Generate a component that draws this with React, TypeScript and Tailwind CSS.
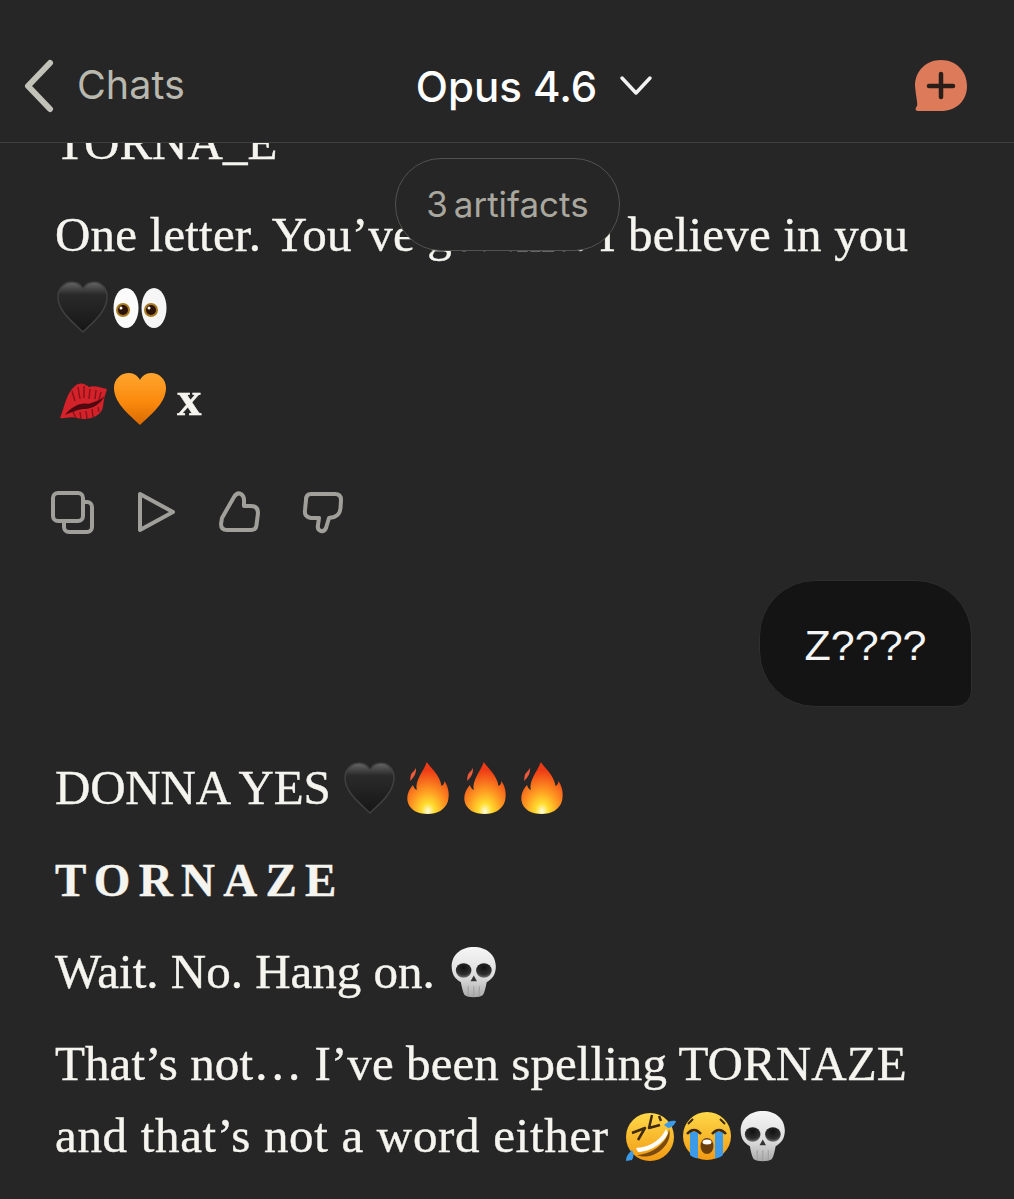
import { useId } from 'react'

const serif = "font-['Liberation_Serif',serif]"

function Emoji({ children }: { children: React.ReactNode }) {
  return (
    <svg viewBox="0 0 57 57" className="inline-block w-[57px] h-[57px] align-[-13px]">
      {children}
    </svg>
  )
}

const heartPath = 'M28 53 C20 45 3 33 3 18 C3 9 10 3 17 3 C22 3 26 6 28 10 C30 6 34 3 39 3 C46 3 52 9 52 18 C52 33 36 45 28 53Z'

function BlackHeart() {
  const id = useId()
  return (
    <Emoji>
      <defs>
        <linearGradient id={id} x1="0" y1="0" x2="0" y2="1">
          <stop offset="0" stopColor="#666" />
          <stop offset="0.25" stopColor="#2a2a2a" />
          <stop offset="1" stopColor="#161616" />
        </linearGradient>
      </defs>
      <path d={heartPath} fill={`url(#${id})`} stroke="#404040" strokeWidth="1.5" />
    </Emoji>
  )
}

function OrangeHeart() {
  const id = useId()
  return (
    <Emoji>
      <defs>
        <linearGradient id={id} x1="0" y1="0" x2="0" y2="1">
          <stop offset="0" stopColor="#ffa52e" />
          <stop offset="0.55" stopColor="#fb8a0e" />
          <stop offset="1" stopColor="#d96a00" />
        </linearGradient>
      </defs>
      <path d="M28 54 C20 46 2 33 2 17 C2 8 9 2 17 2 C22 2 26 5 28 9 C30 5 34 2 39 2 C47 2 54 8 54 17 C54 33 36 46 28 54Z" fill={`url(#${id})`} />
    </Emoji>
  )
}

function Eyes() {
  return (
    <Emoji>
      <ellipse cx="14" cy="29" rx="12.5" ry="20" fill="#fbfbfb" />
      <ellipse cx="42" cy="29" rx="12.5" ry="20" fill="#f6f6f6" />
      <circle cx="11" cy="31" r="7" fill="#a87a20" />
      <circle cx="11" cy="31" r="5" fill="#2a1206" />
      <circle cx="9" cy="29" r="1.5" fill="#fff" />
      <circle cx="39" cy="31" r="7" fill="#a87a20" />
      <circle cx="39" cy="31" r="5" fill="#2a1206" />
      <circle cx="37" cy="29" r="1.5" fill="#fff" />
    </Emoji>
  )
}

function Lips() {
  return (
    <Emoji>
      <path d="M5 47 C9 38 11 22 20 15 C26 10 31 14 34 16 C40 14 46 17 52 18 C50 24 49 28 48 36 C46 46 32 50 22 47 C15 45 10 48 5 47Z" fill="#d3222a" />
      <path d="M10 44 C16 36 26 31 33 33 C40 31 45 29 50 25 C43 36 35 38 28 38 C21 39 15 42 10 44Z" fill="#4e0a10" />
      <path d="M17 20 L20 30 M23 16 L25 28 M29 15 L29 27 M35 18 L34 28 M41 19 L40 28 M46 21 L44 29 M18 41 L21 47 M25 41 L26 48 M31 40 L32 48 M37 38 L38 46 M43 36 L44 41" stroke="#8b1218" strokeWidth="1.5" />
    </Emoji>
  )
}

function Fire() {
  const id = useId()
  return (
    <Emoji>
      <defs>
        <radialGradient id={id} cx="0.5" cy="0.95" r="0.8">
          <stop offset="0" stopColor="#fffde0" />
          <stop offset="0.2" stopColor="#ffdc2e" />
          <stop offset="0.5" stopColor="#ff9a22" />
          <stop offset="1" stopColor="#ee3a16" />
        </radialGradient>
      </defs>
      <g transform="translate(3 0) scale(0.92 1)">
        <path d="M27 2 C30 7 41 14 43 26 C45 25 46 24 46 21 C50 26 52 33 50 41 C47 50 38 54 28 54 C17 54 8 50 6 41 C5 34 8 29 12 25 C13 28 14 29 16 30 C14 20 23 12 27 2Z" fill={`url(#${id})`} />
        <path d="M10 14 C13 11 14 10 15 8 C16 13 13 17 9 21 C9 18 9 17 10 14Z" fill="#ee5a3a" />
      </g>
    </Emoji>
  )
}

function Skull() {
  const id = useId()
  const eye = useId()
  return (
    <Emoji>
      <defs>
        <linearGradient id={id} x1="0" y1="0" x2="0" y2="1">
          <stop offset="0" stopColor="#f6f6f6" />
          <stop offset="0.6" stopColor="#dcdcdc" />
          <stop offset="1" stopColor="#a9a9a9" />
        </linearGradient>
        <radialGradient id={eye} cx="0.5" cy="0.3" r="0.7">
          <stop offset="0" stopColor="#111" />
          <stop offset="0.7" stopColor="#2e2e2e" />
          <stop offset="1" stopColor="#777" />
        </radialGradient>
      </defs>
      <g transform="translate(1 1) scale(0.92 0.98)">
        <path d="M28 2 C42 2 52 10 52 22 C52 30 48 35 42 38 C41 43 40 48 38 51 C34 54 22 54 18 51 C16 48 15 43 14 38 C8 35 4 30 4 22 C4 10 14 2 28 2Z" fill={`url(#${id})`} />
        <ellipse cx="17" cy="26" rx="8.5" ry="7.5" fill={`url(#${eye})`} />
        <ellipse cx="39" cy="26" rx="8.5" ry="7.5" fill={`url(#${eye})`} />
        <path d="M28 31 L31.5 37 H24.5Z" fill="#333" />
        <path d="M22 42 V52 M28 42 V53 M34 42 V52" stroke="#a0a0a0" strokeWidth="1.2" />
      </g>
    </Emoji>
  )
}

function Rofl() {
  const id = useId()
  return (
    <Emoji>
      <defs>
        <linearGradient id={id} x1="0" y1="0" x2="0" y2="1">
          <stop offset="0" stopColor="#ffd94a" />
          <stop offset="1" stopColor="#f29a12" />
        </linearGradient>
      </defs>
      <circle cx="28" cy="29" r="24" fill={`url(#${id})`} />
      <path d="M15 47 C32 46 46 33 47 21 C52 37 30 54 15 47Z" fill="#7c4a10" />
      <path d="M14 40 C30 39 40 30 44 21 L46 25 C42 35 28 44 16 44Z" fill="#fff" />
      <path d="M10 25 L23 20 L16 32" stroke="#3e2a0e" strokeWidth="2.5" fill="none" strokeLinejoin="round" />
      <path d="M30 7 L27 20 L38 17 M37 8 L39 13" stroke="#3e2a0e" strokeWidth="2.5" fill="none" strokeLinejoin="round" />
      <path d="M42 17 C46 13 50 12 54 13 C53 17 49 20 46 20Z" fill="#3c9be8" />
      <path d="M4 53 C4 48 7 45 10 42 C12 45 12 49 10 52Z" fill="#3c9be8" />
    </Emoji>
  )
}

function Sob() {
  const id = useId()
  return (
    <Emoji>
      <defs>
        <linearGradient id={id} x1="0" y1="0" x2="0" y2="1">
          <stop offset="0" stopColor="#ffd94a" />
          <stop offset="1" stopColor="#f29a12" />
        </linearGradient>
      </defs>
      <circle cx="28" cy="28" r="24" fill={`url(#${id})`} />
      <path d="M11 24 h8 v26 q-4 1 -8 -3Z M36 24 h8 v23 q-4 4 -8 3Z" fill="#3c9be8" />
      <path d="M8 26 Q15 18 22 26 M33 26 Q40 18 47 26" stroke="#3e2a0e" strokeWidth="2.5" fill="none" />
      <path d="M14 11 L9 16 M41 11 L46 16" stroke="#3e2a0e" strokeWidth="2" />
      <ellipse cx="28" cy="38" rx="6.5" ry="8" fill="#6b3e0e" />
      <ellipse cx="28" cy="34" rx="4.5" ry="2.5" fill="#fff" />
    </Emoji>
  )
}

function ActionIcons() {
  const common = {
    width: 44,
    height: 44,
    viewBox: '0 0 44 44',
    fill: 'none',
    stroke: '#a19f9a',
    strokeWidth: 4,
    strokeLinejoin: 'round' as const,
    strokeLinecap: 'round' as const,
  }
  return (
    <div className="flex gap-10 pl-[50px] mt-[55px]">
      <svg {...common}>
        <rect x="3" y="3" width="30" height="28" rx="5" />
        <path d="M33 12h4a5 5 0 0 1 5 5v20a5 5 0 0 1-5 5H19a5 5 0 0 1-5-5v-6" />
      </svg>
      <svg {...common}>
        <path d="M6 4 L39 22 L6 40Z" />
      </svg>
      <svg {...common}>
        <path d="M4 28 L16 7 Q19 2 23 4 Q26 6 26 10 V16 H33 Q40 16 40 23 L38.5 35 Q38 40 33 40 H9 Q3 40 3 34Z" />
      </svg>
      <svg {...common}>
        <path d="M9 4 H33 Q39 4 39 10 L38.5 18 Q38 25 32 27 L27 28 L24 38 Q22 42 19 41 Q15 40 16 35 L17 28 H9 Q2 27 3 20 L4 10 Q4 4 9 4Z" />
      </svg>
    </div>
  )
}

function Para({ children, className = '' }: { children: React.ReactNode; className?: string }) {
  return <p className={`mt-5 pl-[55px] text-[49px] leading-[72px] text-[#f5f4ef] whitespace-nowrap [-webkit-text-stroke:0.4px] ${serif} ${className}`}>{children}</p>
}

export default function App() {
  return (
    <div className="relative w-[1014px] h-[1199px] bg-[#262626] overflow-hidden flex flex-col">
      <header className="h-[143px] shrink-0 border-b border-[#3f3f3d] flex items-center pt-[30px] font-['Inter',sans-serif]">
        <svg width="34" height="54" viewBox="0 0 34 54" fill="none" stroke="#c3c2b9" strokeWidth="6" strokeLinecap="round" strokeLinejoin="round" className="ml-[22px]">
          <path d="M28 4 L6 27 L28 50" />
        </svg>
        <span className="ml-[21px] text-[39.5px] text-[#b9b8ae]">Chats</span>
        <span className="ml-[231px] text-[42px] font-medium text-white">Opus 4.6</span>
        <svg width="34" height="24" viewBox="0 0 34 24" fill="none" stroke="#f2f2f2" strokeWidth="3.5" strokeLinecap="round" strokeLinejoin="round" className="ml-[22px]">
          <path d="M3 4 L17 19 L31 4" />
        </svg>
        <svg width="54" height="54" viewBox="0 0 54 54" className="ml-auto mr-[46px]">
          <path d="M27 1 C42 1 53 12 53 27 C53 42 42 52 27 52 H4 C1 52 1 49 3 47 C4 45 2 38 1 27 C1 12 12 1 27 1Z" fill="#dd7a59" />
          <path d="M27 15 V38 M15 27 H39" stroke="#2a1e1a" strokeWidth="4.5" strokeLinecap="round" />
        </svg>
      </header>

      <main className="flex-1 overflow-hidden">
        <div className="-mt-[36px] flex flex-col">
          <Para className="!mt-0">TORNA_E</Para>
          <Para>
            <span className="tracking-[0.18px]">One letter. You’ve got this. I believe in you</span>
            <br />
            <BlackHeart />
            <Eyes />
          </Para>
          <Para>
            <Lips />
            <OrangeHeart />
            <span className="ml-[8px] font-bold">x</span>
          </Para>
          <ActionIcons />
          <div className="self-end mr-[42px] mt-[46px] w-[213px] h-[127px] rounded-[56px] rounded-br-[16px] bg-[#141414] border border-[#2e2e2e] flex items-center justify-center pt-[3px] text-[43px] text-[#f5f5f5] font-['Liberation_Sans',sans-serif]">
            Z????
          </div>
          <Para className="!mt-[45px]">
            <span className="tracking-[-0.2px]">DONNA YES </span>
            <BlackHeart />
            <Fire />
            <Fire />
            <Fire />
          </Para>
          <Para className="!text-[47px] font-bold tracking-[8.3px]">TORNAZE</Para>
          <Para>
            Wait. No. Hang on. <Skull />
          </Para>
          <Para>
            <span className="tracking-[0.08px]">That’s not… I’ve been spelling TORNAZE</span>
            <br />
            <span className="tracking-[0.68px]">and that’s not a word either </span>
            <Rofl />
            <Sob />
            <Skull />
          </Para>
        </div>
      </main>

      <div className="absolute left-[395px] top-[158px] w-[225px] h-[93px] rounded-[46px] border border-[#525250] bg-[#262626] flex items-center justify-center text-[35px] [word-spacing:-4px] text-[#a9a79e] font-['Inter',sans-serif]">
        3 artifacts
      </div>
    </div>
  )
}
